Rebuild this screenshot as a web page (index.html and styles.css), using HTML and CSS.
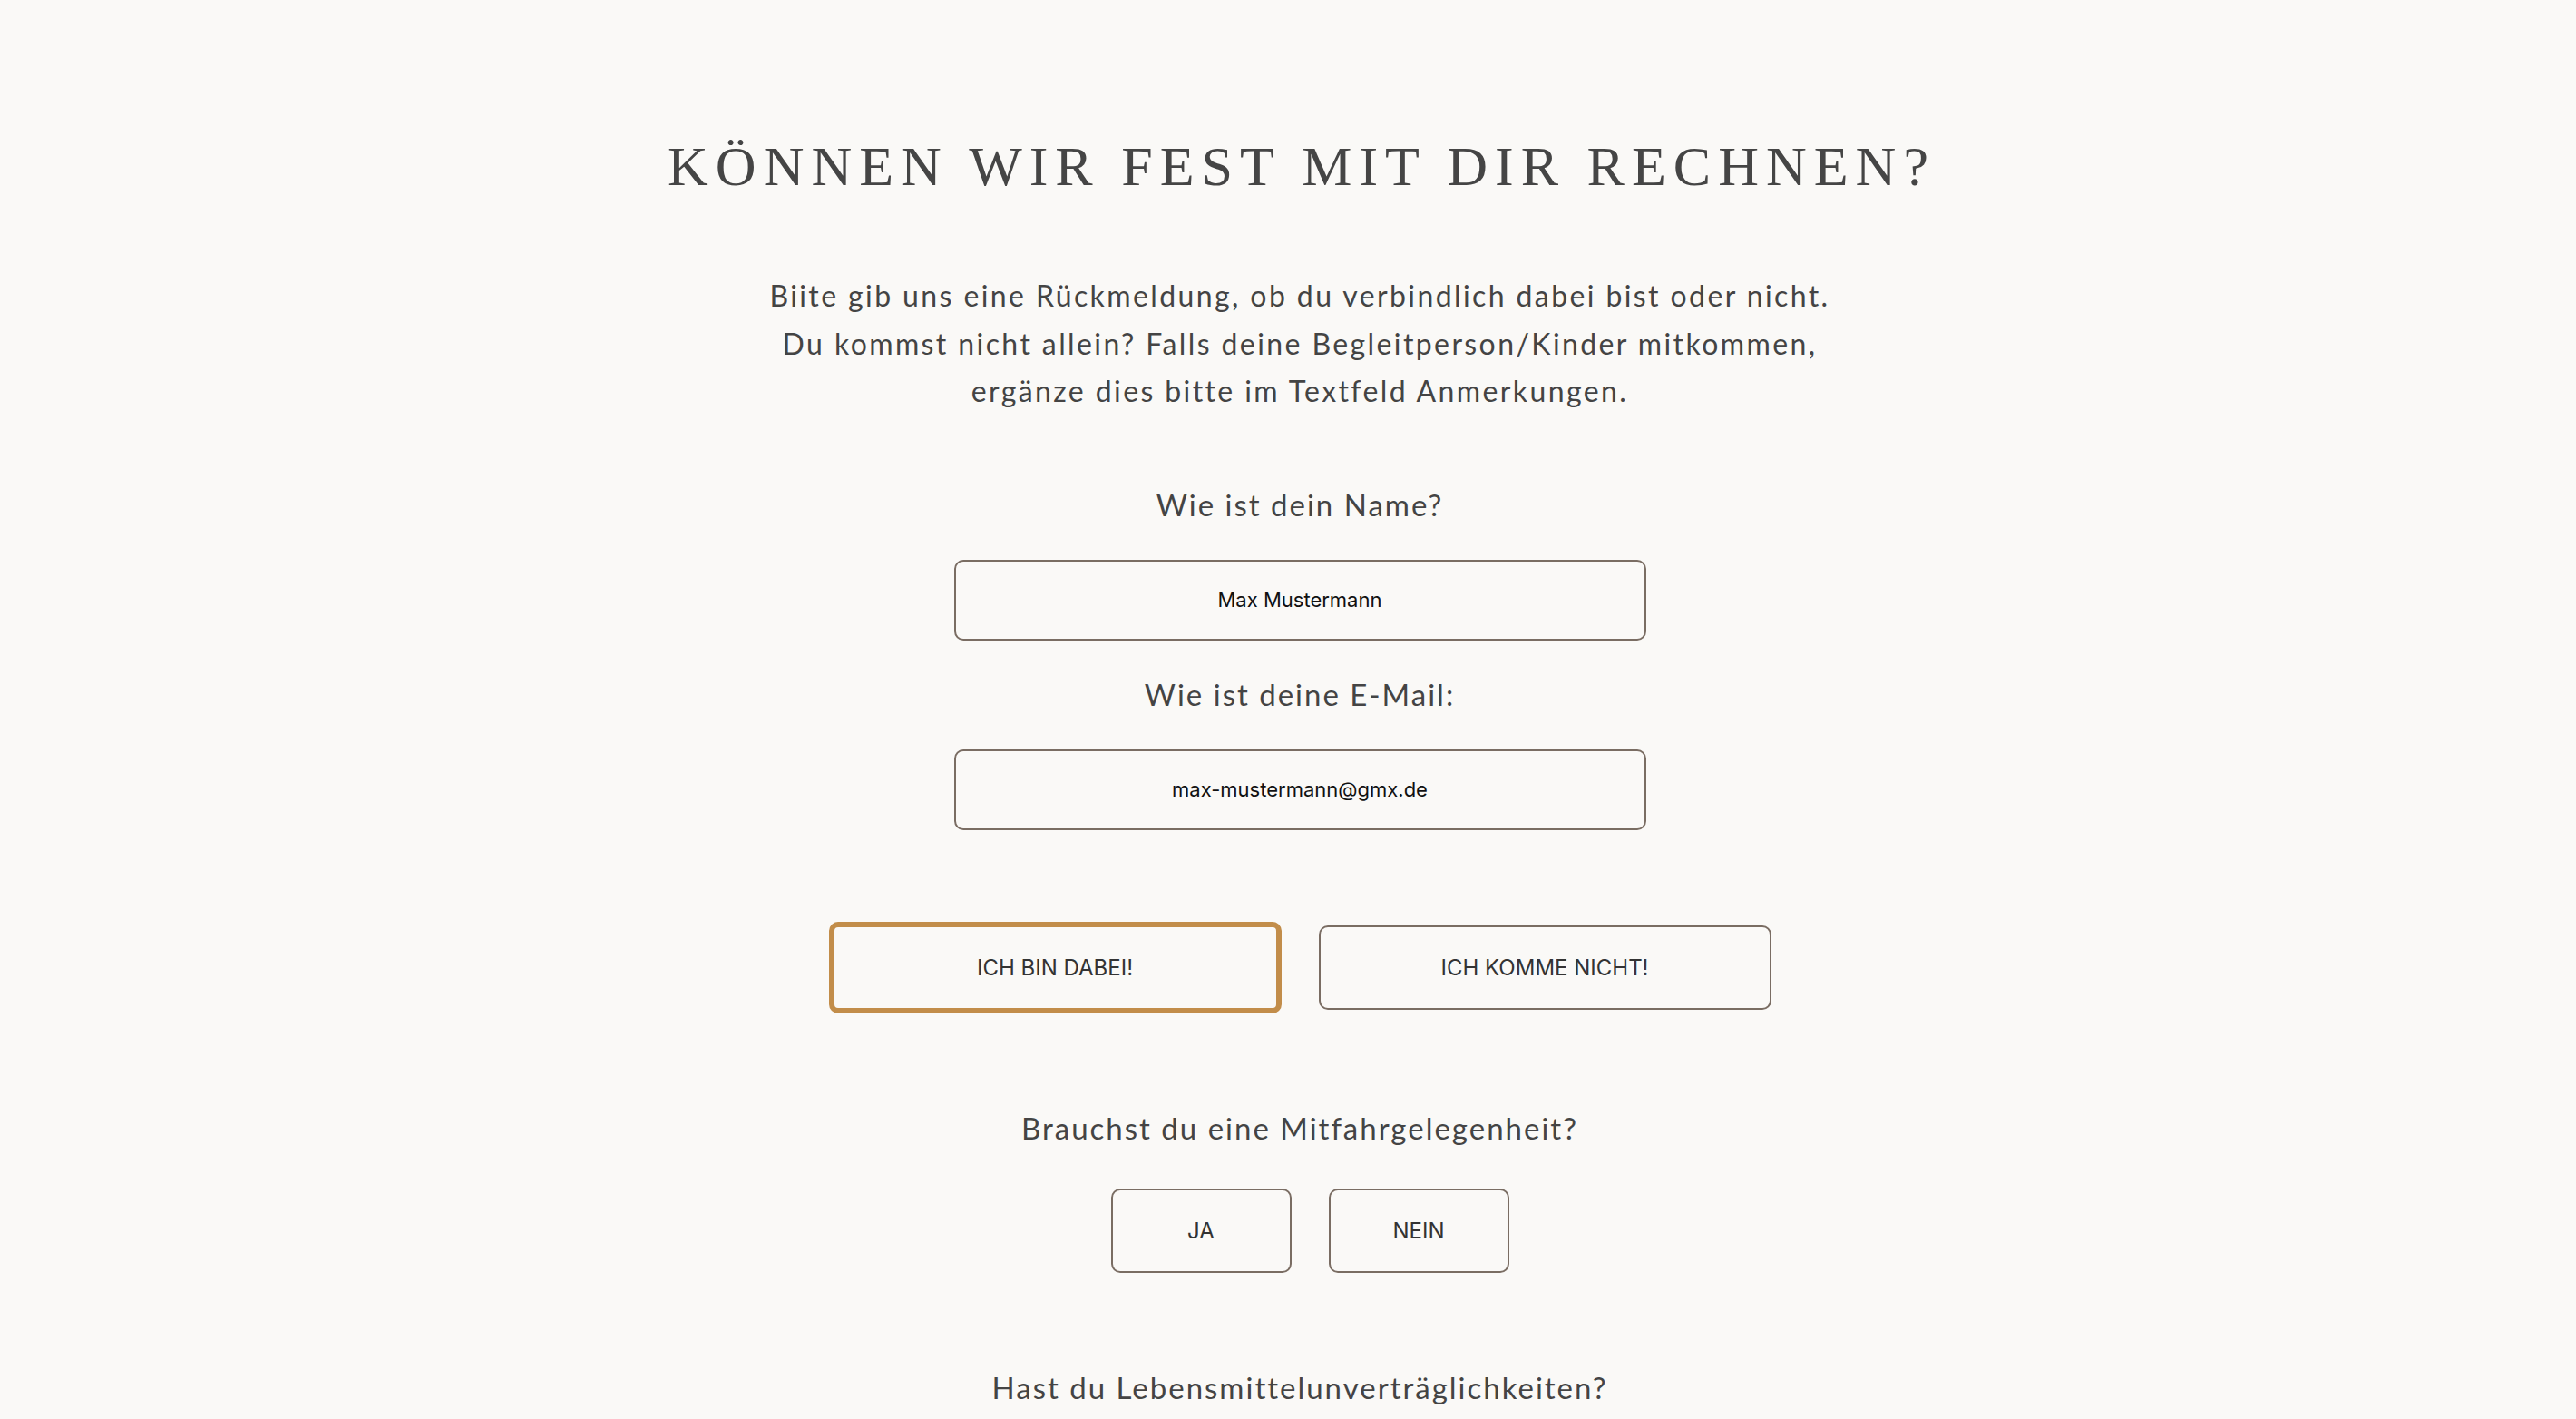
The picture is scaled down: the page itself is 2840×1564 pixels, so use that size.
FILE: index.html
```html
<!DOCTYPE html>
<html lang="de">
<head>
<meta charset="utf-8">
<title>RSVP</title>
<link rel="stylesheet" href="styles.css">
</head>
<body>
<main class="rsvp">
  <h1 class="rsvp-title">KÖNNEN WIR FEST MIT DIR RECHNEN?</h1>
  <p class="rsvp-intro">Biite gib uns eine Rückmeldung, ob du verbindlich dabei bist oder nicht.<br>Du kommst nicht allein? Falls deine Begleitperson/Kinder mitkommen,<br>ergänze dies bitte im Textfeld Anmerkungen.</p>

  <label class="field-label field-label--first" for="name">Wie ist dein Name?</label>
  <input class="text-input" id="name" type="text" value="Max Mustermann">

  <label class="field-label" for="email">Wie ist deine E-Mail:</label>
  <input class="text-input" id="email" type="text" value="max-mustermann@gmx.de">

  <div class="choice-row choice-row--attend">
    <button class="choice choice--wide choice--selected" type="button">ICH BIN DABEI!</button>
    <button class="choice choice--wide" type="button">ICH KOMME NICHT!</button>
  </div>

  <p class="question">Brauchst du eine Mitfahrgelegenheit?</p>
  <div class="choice-row choice-row--ride">
    <button class="choice choice--small" type="button">JA</button>
    <button class="choice choice--small" type="button">NEIN</button>
  </div>

  <p class="question">Hast du Lebensmittelunverträglichkeiten?</p>
</main>
</body>
</html>
```

FILE: styles.css
```css
html, body {
  margin: 0;
  padding: 0;
  background: #faf9f7;
}

body {
  overflow: hidden;
  height: 1564px;
}

.rsvp {
  display: flex;
  flex-direction: column;
  align-items: center;
  padding-left: 26px;
  color: #444444;
  font-family: Lato, "Open Sans", sans-serif;
}

.rsvp-title {
  margin: 152px 0 0;
  padding-left: 4px;
  font-family: "Liberation Serif", "DejaVu Serif", serif;
  font-weight: 400;
  font-size: 62px;
  line-height: 62px;
  letter-spacing: 8px;
  color: #454545;
}

.rsvp-intro {
  margin: 86px 0 0;
  text-align: center;
  font-size: 32px;
  line-height: 52.5px;
  letter-spacing: 2.4px;
  font-weight: 400;
}

.field-label {
  display: block;
  margin: 39px 0 0;
  font-size: 33px;
  line-height: 40px;
  letter-spacing: 2px;
}

.field-label--first {
  margin-top: 78px;
}

.text-input {
  box-sizing: border-box;
  margin-top: 41px;
  width: 763px;
  height: 89px;
  border: 2px solid #7a6d63;
  border-radius: 10px;
  background: transparent;
  text-align: center;
  font-family: Inter, "Liberation Sans", sans-serif;
  font-size: 22px;
  color: #111111;
  outline: none;
}

.choice-row {
  display: flex;
  align-items: center;
  gap: 41px;
}

.choice-row--attend {
  margin-top: 101px;
}

.choice-row--ride {
  margin-top: 47px;
  margin-left: 22px;
}

.choice {
  box-sizing: border-box;
  height: 93px;
  border: 2px solid #7a6d63;
  border-radius: 10px;
  background: transparent;
  font-family: Inter, "Liberation Sans", sans-serif;
  font-size: 24px;
  color: #333333;
  padding: 0;
}

.choice--wide {
  width: 499px;
}

.choice--small {
  width: 199px;
}

.choice--selected {
  height: 101px;
  border: 6px solid #c28d4a;
}

.question {
  margin: 106px 0 0;
  font-size: 33px;
  line-height: 40px;
  letter-spacing: 2px;
}
```
